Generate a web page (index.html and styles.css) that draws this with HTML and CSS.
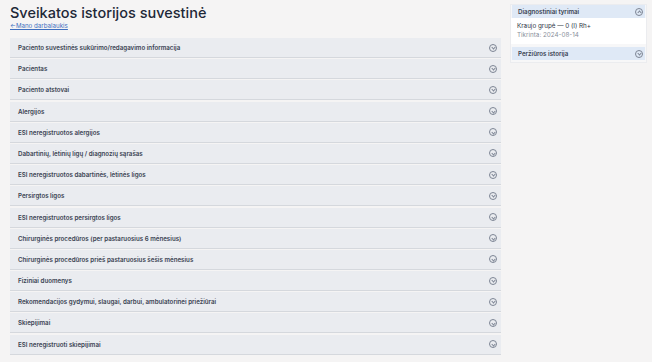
FILE: index.html
```html
<!DOCTYPE html>
<html lang="lt">
<head>
  <meta charset="UTF-8">
  <meta name="viewport" content="width=device-width, initial-scale=1.0">
  <title>Sveikatos istorijos suvestinė</title>
  <link rel="stylesheet" href="styles.css">
</head>
<body>
  <div class="page">
    <main class="main">
      <h1 class="title">Sveikatos istorijos suvestinė</h1>
      <a class="back" href="#">&larr;Mano darbalaukis</a>

      <div class="sections">
        <div class="section"><span>Paciento suvestinės sukūrimo/redagavimo informacija</span><i class="chev"></i></div>
        <div class="section"><span>Pacientas</span><i class="chev"></i></div>
        <div class="section"><span>Paciento atstovai</span><i class="chev"></i></div>
        <div class="section"><span>Alergijos</span><i class="chev"></i></div>
        <div class="section"><span>ESI neregistruotos alergijos</span><i class="chev"></i></div>
        <div class="section"><span>Dabartinių, lėtinių ligų / diagnozių sąrašas</span><i class="chev"></i></div>
        <div class="section"><span>ESI neregistruotos dabartinės, lėtinės ligos</span><i class="chev"></i></div>
        <div class="section"><span>Persirgtos ligos</span><i class="chev"></i></div>
        <div class="section"><span>ESI neregistruotos persirgtos ligos</span><i class="chev"></i></div>
        <div class="section"><span>Chirurginės procedūros (per pastaruosius 6 mėnesius)</span><i class="chev"></i></div>
        <div class="section"><span>Chirurginės procedūros prieš pastaruosius šešis mėnesius</span><i class="chev"></i></div>
        <div class="section"><span>Fiziniai duomenys</span><i class="chev"></i></div>
        <div class="section"><span>Rekomendacijos gydymui, slaugai, darbui, ambulatorinei priežiūrai</span><i class="chev"></i></div>
        <div class="section"><span>Skiepijimai</span><i class="chev"></i></div>
        <div class="section"><span>ESI neregistruoti skiepijimai</span><i class="chev"></i></div>
      </div>
    </main>

    <aside class="side">
      <div class="panel">
        <div class="panel-head"><span>Diagnostiniai tyrimai</span><i class="chev up"></i></div>
        <div class="panel-body">
          <div class="result">Kraujo grupė — 0 (I) Rh+</div>
          <div class="checked">Tikrinta: 2024-08-14</div>
        </div>
      </div>
      <div class="panel">
        <div class="panel-head"><span>Peržiūros istorija</span><i class="chev"></i></div>
      </div>
    </aside>
  </div>
</body>
</html>
```

FILE: styles.css
```css
* {
  margin: 0;
  padding: 0;
  box-sizing: border-box;
}

body {
  background: #f5f4f4;
  font-family: Inter, "Noto Sans", sans-serif;
  color: #2b3443;
}

.page {
  display: flex;
  gap: 9px;
  padding: 4px 6px 0 10px;
}

.main {
  flex: 0 0 491px;
}

.title {
  font-size: 14.5px;
  font-weight: 500;
  color: #1e2838;
  line-height: 18px;
}

.back {
  display: block;
  font-size: 6.2px;
  color: #3f6fbf;
  line-height: 8px;
}

.sections {
  margin-top: 8px;
  display: flex;
  flex-direction: column;
  gap: 1.2px;
}

.section {
  height: 20px;
  display: flex;
  align-items: center;
  justify-content: space-between;
  padding: 0 4px 0 8px;
  background: #eaecf0;
  border-bottom: 1px solid #d5d8dd;
  font-size: 6.2px;
  font-weight: 600;
  color: #3a4352;
}

.chev {
  width: 8px;
  height: 8px;
  border: 0.8px solid #7d8594;
  border-radius: 50%;
  position: relative;
  flex: none;
}

.chev::after {
  content: "";
  position: absolute;
  left: 2.3px;
  top: 1.6px;
  width: 2px;
  height: 2px;
  border-right: 0.8px solid #7d8594;
  border-bottom: 0.8px solid #7d8594;
  transform: rotate(45deg);
}

.chev.up::after {
  top: 2.6px;
  transform: rotate(-135deg);
}

.side {
  flex: 0 0 137px;
  display: flex;
  flex-direction: column;
  gap: 3px;
  padding: 0 1px 2px;
  background: #f7f7f8;
  border: 1px solid #ebecef;
  align-self: flex-start;
}

.panel-head {
  height: 13px;
  display: flex;
  align-items: center;
  justify-content: space-between;
  padding: 0 2px 0 6px;
  background: #dfe9f6;
  font-size: 6.2px;
  font-weight: 600;
  color: #3a4352;
}

.panel-body {
  background: #ffffff;
  padding: 4px 6px;
  margin: 0 -1px;
}

.result {
  font-size: 6.3px;
  color: #2b3443;
  line-height: 9px;
}

.checked {
  font-size: 6.3px;
  color: #8a909b;
  line-height: 9px;
}
```
